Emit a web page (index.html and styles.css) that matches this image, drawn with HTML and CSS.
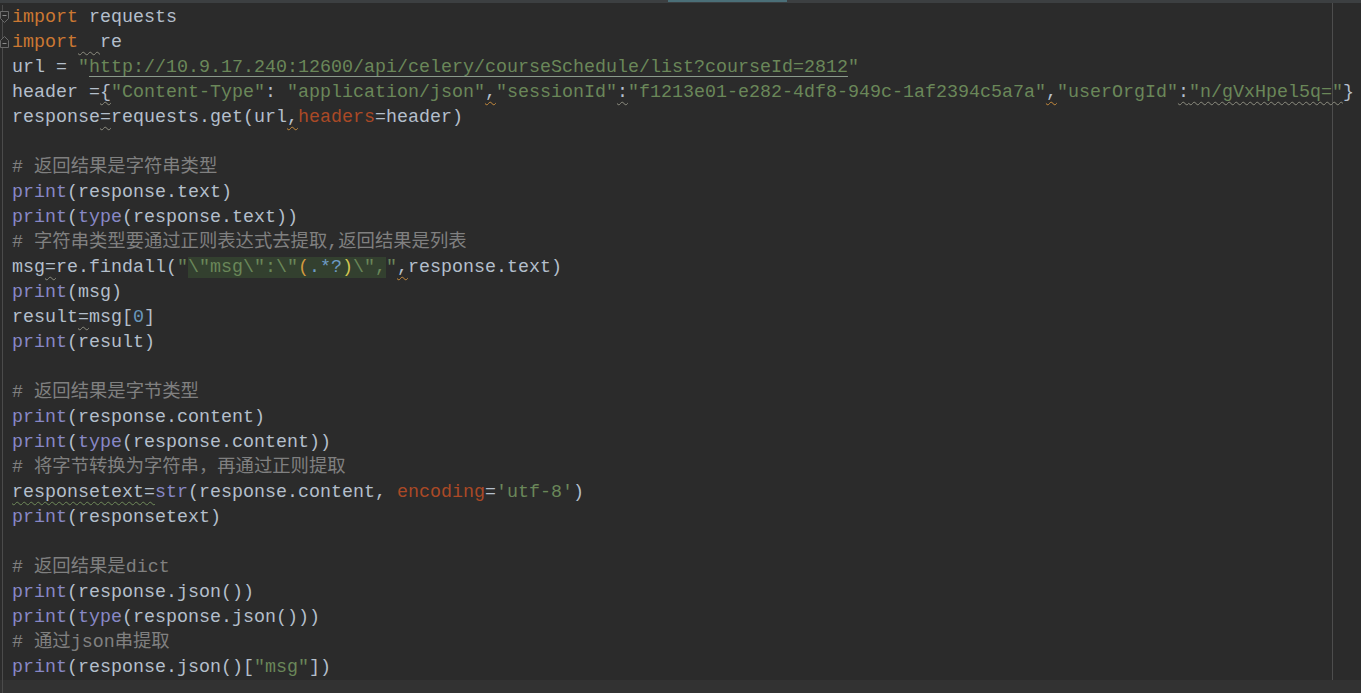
FILE: index.html
```html
<!DOCTYPE html>
<html lang="zh">
<head>
    <meta charset="UTF-8">
    <title>requests_demo.py</title>
    <link rel="stylesheet" href="styles.css">
</head>
<body>
    <div class="tabs"><span class="tab-active"></span></div>
    <div class="editor">
        <div class="line"><span class="gut"><svg class="fold" width="9" height="12" viewBox="0 0 9 12"><path d="M0.5 0.5 H8.5 V7.5 L4.5 11.5 L0.5 7.5 Z" fill="#2b2b2b" stroke="#6a6a6a"/><path d="M2.5 4.5 H6.5" stroke="#8a8a8a"/></svg></span><span class="code"><span class="kw">import</span> requests</span></div>
        <div class="line"><span class="gut"><svg class="fold" width="9" height="12" viewBox="0 0 9 12"><path d="M0.5 11.5 H8.5 V4.5 L4.5 0.5 L0.5 4.5 Z" fill="#2b2b2b" stroke="#6a6a6a"/><path d="M2.5 7.5 H6.5" stroke="#8a8a8a"/></svg></span><span class="code"><span class="kw">import</span><span class="wv">  </span>re</span></div>
        <div class="line"><span class="gut"></span><span class="code">url = <span class="str">"<span class="link">http://10.9.17.240:12600/api/celery/courseSchedule/list?courseId=2812</span>"</span></span></div>
        <div class="line"><span class="gut"></span><span class="code">header =<span class="wv">{</span><span class="str">"Content-Type"</span>: <span class="str">"application/json"</span><span class="wo">,</span><span class="str">"sessionId"</span><span class="wv">:</span><span class="str">"f1213e01-e282-4df8-949c-1af2394c5a7a"</span><span class="wo">,</span><span class="str">"userOrgId"</span><span class="wv">:<span class="str">"n/gVxHpel5q="</span></span>}</span></div>
        <div class="line"><span class="gut"></span><span class="code">response<span class="wv">=</span>requests.get(url<span class="wo">,</span><span class="kwarg">headers</span>=header)</span></div>
        <div class="line"><span class="gut"></span><span class="code"></span></div>
        <div class="line"><span class="gut"></span><span class="code cmt"># 返回结果是字符串类型</span></div>
        <div class="line"><span class="gut"></span><span class="code"><span class="bi">print</span>(response.text)</span></div>
        <div class="line"><span class="gut"></span><span class="code"><span class="bi">print</span>(<span class="bi">type</span>(response.text))</span></div>
        <div class="line"><span class="gut"></span><span class="code cmt"># 字符串类型要通过正则表达式去提取,返回结果是列表</span></div>
        <div class="line"><span class="gut"></span><span class="code">msg<span class="wv">=</span>re.findall(<span class="str">"<span class="rx">\"msg\":\"<span class="p1">(</span><span class="rm">.*?</span><span class="p2">)</span>\",</span>"</span><span class="wo">,</span>response.text)</span></div>
        <div class="line"><span class="gut"></span><span class="code"><span class="bi">print</span>(msg)</span></div>
        <div class="line"><span class="gut"></span><span class="code">result<span class="wv">=</span>msg[<span class="num">0</span>]</span></div>
        <div class="line"><span class="gut"></span><span class="code"><span class="bi">print</span>(result)</span></div>
        <div class="line"><span class="gut"></span><span class="code"></span></div>
        <div class="line"><span class="gut"></span><span class="code cmt"># 返回结果是字节类型</span></div>
        <div class="line"><span class="gut"></span><span class="code"><span class="bi">print</span>(response.content)</span></div>
        <div class="line"><span class="gut"></span><span class="code"><span class="bi">print</span>(<span class="bi">type</span>(response.content))</span></div>
        <div class="line"><span class="gut"></span><span class="code cmt"># 将字节转换为字符串，再通过正则提取</span></div>
        <div class="line"><span class="gut"></span><span class="code"><span class="ws">responsetext=</span><span class="bi">str</span>(response.content, <span class="kwarg">encoding</span>=<span class="str">'utf-8'</span>)</span></div>
        <div class="line"><span class="gut"></span><span class="code"><span class="bi">print</span>(responsetext)</span></div>
        <div class="line"><span class="gut"></span><span class="code"></span></div>
        <div class="line"><span class="gut"></span><span class="code cmt"># 返回结果是dict</span></div>
        <div class="line"><span class="gut"></span><span class="code"><span class="bi">print</span>(response.json())</span></div>
        <div class="line"><span class="gut"></span><span class="code"><span class="bi">print</span>(<span class="bi">type</span>(response.json()))</span></div>
        <div class="line"><span class="gut"></span><span class="code cmt"># 通过json串提取</span></div>
        <div class="line"><span class="gut"></span><span class="code"><span class="bi">print</span>(response.json()[<span class="str">"msg"</span>])</span></div>
        <div class="line current"><span class="gut"></span><span class="code"></span></div>
    </div>
</body>
</html>
```

FILE: styles.css
```css
body {
    margin: 0;
    background-color: #2b2b2b;
    height: 693px;
    overflow: hidden;
}
.tabs {
    height: 3px;
    background-color: #3c3f41;
    display: flex;
    padding-left: 668px;
}
.tab-active {
    width: 119px;
    height: 2px;
    background-color: #4b6f78;
}
.editor {
    padding-top: 2px;
    font-family: "Liberation Mono", "Noto Sans CJK SC", monospace;
    font-size: 18.33px;
    color: #b4bfcb;
    background-image: linear-gradient(to right, transparent 1332px, #4d4d4d 1332px, #4d4d4d 1333px, transparent 1333px);
}
.line {
    display: flex;
    height: 25px;
    line-height: 25px;
    white-space: pre;
}
.line.current {
    background-color: #323232;
}
.gut {
    flex: none;
    width: 9px;
    margin-left: 2px;
    border-left: 1px solid #4b4b4b;
    position: relative;
}
.fold {
    position: absolute;
    left: -3px;
    top: 6px;
}
.code {
    flex: 1;
}
.kw { color: #cc7832; }
.bi { color: #8888c6; }
.str { color: #6a8759; }
.kwarg { color: #aa4926; }
.num { color: #6897bb; }
.cmt { color: #808080; }
.link {
    text-decoration: underline;
    text-decoration-color: #8b9a8c;
    text-underline-offset: 4px;
}
.rx {
    background-color: #33402f;
    color: #6a8759;
}
.p1 { color: #d29a3e; }
.rm { color: #6d9ac4; }
.p2 { color: #d4c650; }
.wv, .wo, .ws {
    text-decoration-line: underline;
    text-decoration-style: wavy;
    text-decoration-thickness: 1px;
    text-underline-offset: 4px;
}
.wv { text-decoration-color: #8d8d80; }
.wo { text-decoration-color: #c58a3c; }
.ws { text-decoration-color: #6f8a5a; }
```
